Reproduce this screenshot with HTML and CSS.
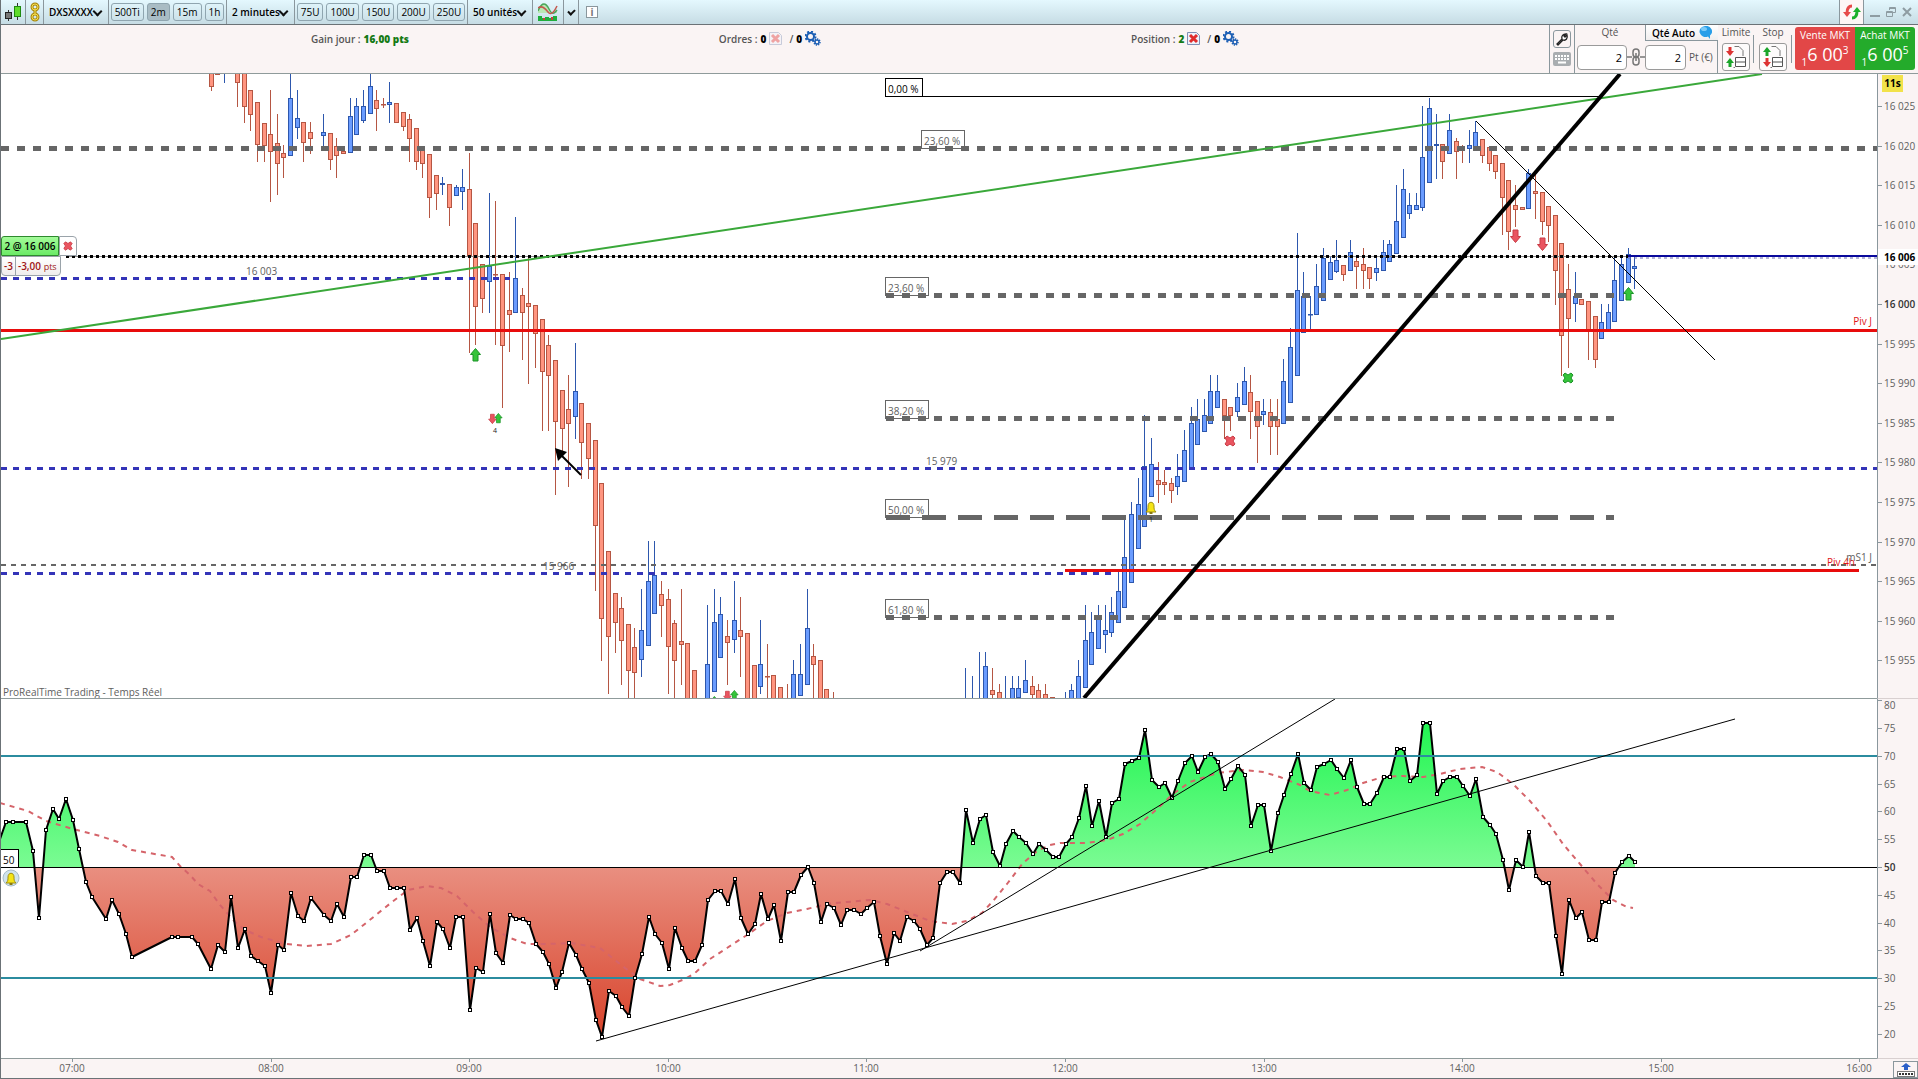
FILE: index.html
```html
<!DOCTYPE html>
<html lang="fr">
<head>
  <meta charset="UTF-8">
  <meta name="viewport" content="width=device-width, initial-scale=1.0">
  <title>DXSXXXX - 2 minutes</title>
  <link rel="stylesheet" href="styles.css">
</head>
<body>
  <header class="toolbar">
    <div class="tool tool-candles">
      <svg width="16" height="20" viewBox="0 0 16 20">
        <path d="M3.5 8v11M12.500 1v17" stroke="#333" />
        <rect x="0.500" y="10.500" width="6" height="6" fill="#777" stroke="#222" />
        <rect x="9.500" y="4.500" width="6" height="10" fill="#5fdc2c" stroke="#1f8a10" />
      </svg>
    </div>
    <div class="tool tool-link">
      <svg width="10" height="20" viewBox="0 0 10 20" fill="none" stroke="#a98a10" stroke-width="3">
        <rect x="2" y="2" width="6" height="6" rx="3" />
        <rect x="2" y="12" width="6" height="6" rx="3" />
        <path d="M5 6v8" />
        <g stroke="#f5dc50" stroke-width="1">
          <rect x="2" y="2" width="6" height="6" rx="3" />
          <rect x="2" y="12" width="6" height="6" rx="3" />
          <path d="M5 6v8" />
        </g>
      </svg>
    </div>
    <div class="tool tool-symbol">
      <select aria-label="Instrument"><option>DXSXXXX</option></select>
    </div>
    <div class="tool tool-units time-units">
      <button type="button">500Ti</button>
      <button type="button" class="active">2m</button>
      <button type="button">15m</button>
      <button type="button">1h</button>
    </div>
    <div class="tool tool-period">
      <select aria-label="Période"><option>2 minutes</option></select>
    </div>
    <div class="tool tool-units bar-units">
      <button type="button">75U</button>
      <button type="button">100U</button>
      <button type="button">150U</button>
      <button type="button">200U</button>
      <button type="button">250U</button>
    </div>
    <div class="tool tool-count">
      <select aria-label="Nombre d'unités"><option>50 unités</option></select>
    </div>
    <div class="tool tool-indicators">
      <svg width="20" height="20" viewBox="0 0 20 20">
        <path d="M0 9C4 -1 8 1 11 7s5 5 8 1v3H0z" fill="#b8e8b4" />
        <path d="M0 9C4 -1 8 1 11 7s5 5 8 1" fill="none" stroke="#4aa65a" stroke-width="1.500" />
        <path d="M0 6c4-3 7 0 10 4s6 0 9-6" fill="none" stroke="#c4574e" stroke-width="1.500" />
        <path d="M0 14h4v2h3v-1h4v1h4v-2h4v5H0z" fill="#1eae3c" />
        <path d="M5 16h2v2H5zM13 15h2v3h-2z" fill="#c84040" />
      </svg>
    </div>
    <div class="tool tool-more"><button type="button" class="chevron" aria-label="Plus"></button></div>
    <div class="tool tool-info"><button type="button" class="info">i</button></div>
    <div class="window-actions">
      <button type="button" class="sync" aria-label="Synchroniser">
        <svg width="18" height="18" viewBox="0 0 18 18">
          <path d="M9 3C5 3 4 6 4 10" fill="none" stroke="#e64a4a" stroke-width="3" />
          <path d="M0 9h8l-4 5z" fill="#e64a4a" />
          <path d="M9 15c4 0 5-3 5-7" fill="none" stroke="#1cb02c" stroke-width="3" />
          <path d="M10 9h8l-4-5z" fill="#1cb02c" />
        </svg>
      </button>
      <button type="button" aria-label="Réduire">
        <svg width="10" height="12" viewBox="0 0 10 12"><path d="M0 10h10" stroke="#8e9ca2" stroke-width="2" /></svg>
      </button>
      <button type="button" aria-label="Restaurer">
        <svg width="10" height="12" viewBox="0 0 10 12" fill="none" stroke="#8e9ca2" stroke-width="1"><path d="M3.500 4V1.500h6v5H7M3 2.500h6" /><path d="M0.500 5.500h6v5h-6zM0 6.500h6" /></svg>
      </button>
      <button type="button" aria-label="Fermer">
        <svg width="10" height="12" viewBox="0 0 10 12"><path d="M1 2l8 8M9 2l-8 8" stroke="#8e9ca2" stroke-width="2" /></svg>
      </button>
    </div>
  </header>

  <section class="trading">
    <div class="status">
      <p>Gain jour : <b class="gain">16,00 pts</b></p>
      <p>Ordres : <b>0</b>
        <button type="button" class="clear" disabled aria-label="Annuler les ordres"><svg width="13" height="13"><use href="#cross" /></svg></button>
        <span>/</span><b>0</b>
        <svg width="16" height="15"><use href="#gears" /></svg>
      </p>
      <p>Position : <b class="gain">2</b>
        <button type="button" class="clear" aria-label="Fermer la position"><svg width="13" height="13"><use href="#cross" /></svg></button>
        <span>/</span><b>0</b>
        <svg width="16" height="15"><use href="#gears" /></svg>
      </p>
    </div>

    <div class="tools">
      <button type="button" class="wrench" aria-label="Réglages">
        <svg width="14" height="14" viewBox="0 0 14 14"><path d="M2 12l5-5c-1-3 1-5 4-5L9 4l1 1 2-2c1 3-1 6-4 5l-5 5z" fill="#fff" stroke="#222" stroke-width="1.300" /></svg>
      </button>
      <svg width="18" height="14" viewBox="0 0 18 14">
        <rect width="18" height="14" rx="2" fill="#a9adb0" />
        <path d="M2 4h14M2 7h14" stroke="#fff" stroke-width="2" stroke-dasharray="2 1" />
        <path d="M5 10.500h8" stroke="#fff" stroke-width="2" />
      </svg>
    </div>
    <div class="quantity">
      <label for="qty" class="qty-label">Qté</label>
      <button type="button" class="auto">Qté Auto
        <svg width="13" height="13" viewBox="0 0 13 13"><path d="M6 0a6 5.500 0 1 0 3 10.500l2 2.500V9.500A6 5.500 0 0 0 6 0z" fill="#279ee8" /><ellipse cx="5" cy="3" rx="3" ry="2" fill="#7ccbf8" /></svg>
      </button>
      <div class="fields">
        <input type="text" id="qty" class="qty" value="2">
        <svg width="18" height="18" viewBox="0 0 18 18" fill="none" stroke="#777" stroke-width="1.500">
          <rect x="6" y="1" width="6" height="8" rx="3" /><rect x="6" y="9" width="6" height="8" rx="3" /><path d="M9 5v8M0 9h5M13 9h5" />
        </svg>
        <input type="text" class="auto-qty" value="2" aria-label="Quantité auto">
        <span>Pt (€)</span>
      </div>
    </div>
    <div class="order">
      <span>Limite</span>
      <button type="button" aria-label="Ordre limite">
        <svg width="24" height="24" viewBox="0 0 24 24">
          <path d="M10.500 1.500H15l4 4V11M9.500 22.500H11" fill="none" stroke="#777" />
          <path d="M6 2v5" stroke="#d33" stroke-width="3" /><path d="M2 6h8l-4 5z" fill="#d33" />
          <path d="M6 22v-5" stroke="#1ba52a" stroke-width="3" /><path d="M2 18h8l-4-5z" fill="#1ba52a" />
          <path d="M11.500 12.500h10v9h-10zM11 17h11" fill="#fff" stroke="#555" />
        </svg>
      </button>
    </div>
    <div class="order">
      <span>Stop</span>
      <button type="button" aria-label="Ordre stop">
        <svg width="24" height="24" viewBox="0 0 24 24">
          <path d="M10.500 1.500H15l4 4V11M9.500 22.500H11" fill="none" stroke="#777" />
          <path d="M6 11V6" stroke="#1ba52a" stroke-width="3" /><path d="M2 7h8L6 2z" fill="#1ba52a" />
          <path d="M6 13v5" stroke="#d33" stroke-width="3" /><path d="M2 17h8l-4 5z" fill="#d33" />
          <path d="M11.500 12.500h10v9h-10zM11 17h11" fill="#fff" stroke="#555" />
        </svg>
      </button>
    </div>
    <div class="market">
      <button type="button" class="sell"><span>Vente MKT</span><span class="quote"><sub>1</sub>6 00<sup>3</sup></span></button>
      <button type="button" class="buy"><span>Achat MKT</span><span class="quote"><sub>1</sub>6 00<sup>5</sup></span></button>
    </div>
  </section>

  <main class="charts">
    <div class="pane">
      <svg id="price" viewBox="1 74 1876 624" preserveAspectRatio="none">
        <g id="candles"></g>
        <g class="levels">
          <path class="fib" d="M1 148.500H1877" />
          <path class="fib" d="M886 295.500H1614M886 418.500H1614M886 617.500H1614" />
          <path class="fib-half" d="M886 517.500H1614" />
          <path class="zero" d="M886 96.500H1600" />
          <path class="blue-dash" d="M1 278.500H510M1 468.500H1877M1 573.500H1111" />
          <path class="support" d="M1 565H1877" />
          <path class="pivot" d="M1 330.500H1877M1065 570.500H1859" />
          <path class="entry" d="M66 256.500H1628" />
          <path class="entry-dots" d="M66 256.500H1628" />
          <path class="last" d="M1628 256H1877" />
          <path class="last-dots" d="M1628 258H1877" />
        </g>
        <g class="labels">
          <rect x="885.500" y="78.500" width="37" height="18" class="black" />
          <rect x="921.500" y="130.500" width="43" height="18" />
          <rect x="885.500" y="277.500" width="43" height="18" />
          <rect x="885.500" y="400.500" width="43" height="18" />
          <rect x="885.500" y="499.500" width="43" height="18" />
          <rect x="885.500" y="599.500" width="43" height="18" />
          <text x="888" y="93" class="black">0,00 %</text>
          <text x="924" y="145">23,60 %</text>
          <text x="888" y="292">23,60 %</text>
          <text x="888" y="415">38,20 %</text>
          <text x="888" y="514">50,00 %</text>
          <text x="888" y="614">61,80 %</text>
          <text x="246" y="275">16 003</text>
          <text x="926" y="465">15 979</text>
          <text x="543" y="570">15 966</text>
          <text x="1872" y="325" class="red" text-anchor="end">Piv J</text>
          <text x="1855" y="566" class="red" text-anchor="end">Piv 4h</text>
          <text x="1872" y="561" text-anchor="end">mS1 J</text>
          <text x="3" y="696">ProRealTime Trading - Temps Réel</text>
        </g>
        <path d="M1 339L1762 74" stroke="#3aa83a" stroke-width="2" />
        <path d="M1084 698L1620 74" stroke="#000" stroke-width="4" />
        <path d="M1476 121L1715 360" stroke="#000" />
        <path d="M581 475L562 456" stroke="#000" stroke-width="2" />
        <path d="M555 448l12 4-9 9z" />
        <g class="up">
          <use href="#arrow" x="475" y="348" />
          <use href="#arrow" x="1628" y="287" />
          <use href="#arrow" transform="translate(498 413) scale(.75)" />
          <use href="#arrow" transform="translate(734 690) scale(.75)" />
          <use href="#arrow" transform="translate(714 696) scale(.75)" />
          <use href="#x-mark" x="1568" y="378" />
        </g>
        <g class="down">
          <use href="#arrow" transform="translate(1515 243) scale(1 -1)" />
          <use href="#arrow" transform="translate(1542 251) scale(1 -1)" />
          <use href="#arrow" transform="translate(492 424) scale(.75 -.75)" />
          <use href="#arrow" transform="translate(727 701) scale(.75 -.75)" />
          <use href="#x-mark" x="1230" y="441" />
        </g>
        <use href="#bell" x="1151" y="507" />
        <text x="493" y="433" class="tiny">4</text>
        <text x="1149" y="522" class="tiny">1</text>
      </svg>
      <div class="position">
        <button type="button" class="size">2 @ 16 006</button>
        <button type="button" class="close" aria-label="Fermer"><svg width="10" height="10" viewBox="-6 -6 12 12" class="down"><use href="#x-mark" /></svg></button>
        <div class="result"><span>-3</span><span>-3,00 <small>pts</small></span></div>
      </div>
    </div>
    <div class="scale">
      <svg id="price-scale" viewBox="1878 74 40 624" preserveAspectRatio="none"></svg>
      <span class="countdown">11s</span>
    </div>

    <div class="pane">
      <svg id="rsi" viewBox="1 699 1876 359" preserveAspectRatio="none">
        <defs>
          <linearGradient id="over" gradientUnits="userSpaceOnUse" x1="0" y1="723" x2="0" y2="867">
            <stop offset="0" stop-color="#22f552" /><stop offset="1" stop-color="#7bfb93" />
          </linearGradient>
          <linearGradient id="under" gradientUnits="userSpaceOnUse" x1="0" y1="867" x2="0" y2="1038">
            <stop offset="0" stop-color="#e98f80" /><stop offset="1" stop-color="#d8432b" />
          </linearGradient>
          <clipPath id="above"><rect x="0" y="699" width="1877" height="168" /></clipPath>
          <clipPath id="below"><rect x="0" y="867" width="1877" height="191" /></clipPath>
        </defs>
        <path id="area-over" fill="url(#over)" clip-path="url(#above)" />
        <path id="area-under" fill="url(#under)" clip-path="url(#below)" />
        <path id="average" class="average" />
        <path class="mid" d="M1 867.500H1877" />
        <path id="rsi-line" class="rsi-line" />
        <path class="band" d="M1 756H1877M1 978H1877" />
        <g id="rsi-points" class="points"></g>
        <path class="trend" d="M596 1041L1735 719M920 951L1335 699" />
        <rect x="0.500" y="849.500" width="18" height="18" fill="#fff" stroke="#000" />
        <text x="3" y="864" class="black">50</text>
        <circle cx="11" cy="878" r="8" fill="#cfe3ec" stroke="#a8bcc8" />
        <use href="#bell" x="11" y="878" />
      </svg>
    </div>
    <div class="scale">
      <svg id="rsi-scale" viewBox="1878 699 40 359" preserveAspectRatio="none"></svg>
    </div>

    <div class="times"><svg id="time-scale" viewBox="1 1059 1917 19" preserveAspectRatio="none"></svg>
      <button type="button" class="dock" aria-label="Afficher le panneau">
        <svg width="20" height="14" viewBox="0 0 20 14">
          <path d="M10 0l5 4h-3v3H8V4H5z" fill="#2a5fc8" />
          <rect x="1.500" y="8.500" width="17" height="5" fill="#fff" stroke="#777" />
          <path d="M3 11h14" stroke="#333" stroke-width="2" stroke-dasharray="2 1" />
        </svg>
      </button>
    </div>
  </main>

  <svg class="symbols" width="0" height="0">
    <symbol id="cross" viewBox="0 0 13 13">
      <path d="M0.500 0.500h9l3 3v9h-12z" fill="#eef1fa" stroke="#7d8fb5" />
      <path d="M3 3l7 7M10 3l-7 7" stroke="#e02c2c" stroke-width="3" />
    </symbol>
    <symbol id="gears" viewBox="0 0 16 15">
      <circle cx="5.500" cy="5.500" r="3.500" fill="none" stroke="#1d5fb4" stroke-width="2" />
      <circle cx="5.500" cy="5.500" r="5" fill="none" stroke="#1d5fb4" stroke-width="2" stroke-dasharray="2 1.900" />
      <circle cx="12" cy="11" r="2" fill="none" stroke="#1d5fb4" stroke-width="1.500" />
      <circle cx="12" cy="11" r="3" fill="none" stroke="#1d5fb4" stroke-width="1.500" stroke-dasharray="1.200 1.100" />
    </symbol>
    <g id="arrow"><path d="M.5.5l5 6h-2.500v6.500h-5V6.500h-2.500z" /></g>
    <g id="x-mark"><path d="M-3-5l3 2 3-2 2 2-2 3 2 3-2 2-3-2-3 2-2-2 2-3-2-3z" /></g>
    <g id="bell">
      <path d="M-5 5c2-2 2-3 2-6 0-5 6-5 6 0 0 3 0 4 2 6z" fill="#f5e416" stroke="#a08f10" />
      <path d="M-1.500 6h3" stroke="#8a7a10" stroke-width="2" />
    </g>
  </svg>

  <script src="chart.js"></script>
</body>
</html>
```

FILE: styles.css
```css
* {
  box-sizing: border-box;
}

body {
  display: flex;
  flex-direction: column;
  height: 100vh;
  margin: 0;
  border-left: 1px solid #6b7276;
  border-bottom: 1px solid #6b7276;
  background-color: #faf4f4;
  color: #555;
  font-family: "Open Sans", sans-serif;
  font-size: 10px;
  line-height: 14px;
  overflow: hidden;
}

button, input, select {
  margin: 0;
  padding: 0;
  border: none;
  background: none;
  color: #000;
  font: inherit;
}

svg {
  display: block;
}

p {
  margin: 0;
}

/* Top toolbar */
.toolbar {
  display: flex;
  flex: none;
  height: 25px;
  border-bottom: 1px solid #6b7276;
  background: linear-gradient(#e4f8fe, #c6dce4);
}

.tool {
  position: relative;
  display: flex;
  align-items: center;
  justify-content: center;
  border-right: 1px solid #8a979d;
}

.tool-candles {
  width: 25px;
}

.tool-link {
  width: 18px;
}

.tool-symbol {
  width: 65px;
}

.tool-period {
  width: 68px;
}

.tool-count {
  width: 65px;
}

.tool-indicators {
  width: 31px;
}

.tool-more {
  width: 15px;
}

.tool-info {
  padding-left: 7px;
  border-right: none;
}

.tool select {
  width: 100%;
  height: 20px;
  padding-left: 5px;
  appearance: none;
  font-weight: 600;
}

.tool-symbol::after, .tool-period::after, .tool-count::after, .chevron::after {
  content: "";
  width: 5px;
  height: 5px;
  border-right: 2px solid #111;
  border-bottom: 2px solid #111;
  transform: rotate(45deg);
}

.tool-symbol::after, .tool-period::after, .tool-count::after {
  position: absolute;
  top: 8px;
  right: 7px;
  pointer-events: none;
}

.chevron {
  display: flex;
  width: 5px;
  height: 8px;
}

.tool-units {
  gap: 3px;
  padding: 0 3px;
}

.time-units {
  width: 118px;
}

.bar-units {
  width: 173px;
}

.tool-units button {
  height: 18px;
  padding: 0 3px;
  border: 1px solid #8fa5af;
  border-radius: 3px;
}

.tool-units .active {
  background-color: #a9bcc4;
}

.info {
  width: 12px;
  height: 12px;
  border: 1px solid #8a979d;
  background-color: #fff;
  color: #777;
  font-weight: bold;
  line-height: 10px;
}

.window-actions {
  display: flex;
  align-items: center;
  gap: 6px;
  margin-left: auto;
  padding-right: 6px;
}

.window-actions .sync {
  display: flex;
  align-items: center;
  justify-content: center;
  width: 25px;
  height: 24px;
  border-left: 1px solid #8a979d;
  border-right: 1px solid #8a979d;
  background-color: #fdf6f6;
}

/* Trading bar */
.trading {
  display: flex;
  flex: none;
  height: 49px;
  border-bottom: 1px solid #8f9b9b;
}

.status {
  display: flex;
  flex: 1;
  justify-content: space-evenly;
  padding-top: 6px;
  font-weight: 600;
}

.status p {
  display: flex;
  align-items: center;
  gap: 3px;
  height: 15px;
}

.status b {
  color: #000;
}

.status .gain {
  color: #147a14;
}

.clear:disabled {
  opacity: 0.4;
}

.clear + span {
  margin-left: 4px;
}

.tools {
  display: flex;
  flex-direction: column;
  align-items: center;
  gap: 4px;
  width: 26px;
  padding-top: 5px;
  border-left: 1px solid #8a979d;
  border-right: 1px solid #8a979d;
}

.wrench {
  display: flex;
  align-items: center;
  justify-content: center;
  width: 18px;
  height: 18px;
  border: 1px solid #8a979d;
  border-radius: 3px;
}

.quantity {
  display: grid;
  grid-template-columns: 70px 73px;
  grid-template-rows: 16px 1fr;
  width: 143px;
  border-right: 1px solid #8a979d;
}

.qty-label {
  text-align: center;
}

.auto {
  display: flex;
  align-items: center;
  justify-content: center;
  gap: 4px;
  border-left: 1px solid #8a979d;
  border-bottom: 1px solid #8a979d;
  background: linear-gradient(#fff, #f0eeee);
  font-weight: 600;
}

.fields {
  grid-column: 1 / 3;
  display: flex;
  align-items: center;
  padding-left: 2px;
}

.fields input {
  height: 25px;
  padding-right: 4px;
  border: 1px solid #9a9a9a;
  border-radius: 4px;
  background-color: #fff;
  text-align: right;
  font-size: 11px;
}

.fields .qty {
  width: 50px;
}

.fields .auto-qty {
  width: 41px;
}

.fields span {
  padding-left: 3px;
}

.order {
  position: relative;
  display: flex;
  flex-direction: column;
  align-items: center;
  gap: 4px;
  width: 36px;
}

.order + .order {
  width: 38px;
}

.order::after {
  content: "";
  position: absolute;
  top: 10px;
  right: 0;
  width: 1px;
  height: 28px;
  background-color: #8a979d;
}

.order button {
  display: flex;
  align-items: center;
  justify-content: center;
  width: 28px;
  height: 28px;
  border: 1px solid #9a9a9a;
  border-radius: 3px;
  background-color: #fdfbfb;
}

.market {
  display: flex;
  padding: 2px 3px 3px;
}

.market button {
  display: flex;
  flex-direction: column;
  align-items: center;
  width: 60px;
  padding-top: 1px;
  color: #fff;
}

.market .sell {
  border-radius: 3px 0 0 3px;
  background-color: #e24747;
}

.market .buy {
  border-radius: 0 3px 3px 0;
  background-color: #24ab2b;
}

.quote {
  font-size: 18px;
  line-height: 24px;
}

.quote sub, .quote sup {
  font-size: 10px;
  line-height: 0;
}

/* Charts */
.charts {
  flex: 1;
  display: grid;
  grid-template-columns: 1fr 41px;
  grid-template-rows: 625fr 360fr 19px;
  min-height: 0;
}

.pane, .scale {
  position: relative;
  min-width: 0;
  min-height: 0;
}

.pane {
  border-bottom: 1px solid #8f9b9b;
  background-color: #fff;
}

.scale {
  border-left: 1px solid #8a979d;
  border-bottom: 1px solid #d8d0d0;
}

.scale:last-of-type {
  border-bottom-color: #faf4f4;
}

.pane > svg, .scale > svg, .times > svg {
  width: 100%;
  height: 100%;
}

.times {
  position: relative;
  grid-column: 1 / 3;
  min-height: 0;
}

.dock {
  position: absolute;
  right: 0;
  bottom: 0;
  display: flex;
  align-items: center;
  justify-content: center;
  width: 25px;
  height: 17px;
  border: 1px solid #8a979d;
}

text {
  fill: #606060;
  font-size: 10px;
}

.black {
  fill: #000;
}

.red {
  fill: #e01515;
}

.tiny {
  fill: #222;
  font-size: 7px;
}

.labels rect {
  fill: none;
  stroke: #666;
}

.labels rect.black {
  stroke: #000;
}

.bull {
  fill: #6a9cff;
  stroke: #2d57ad;
}

.bear {
  fill: #ff9580;
  stroke: #b55643;
}

.levels path, .average, .mid, .rsi-line, .band, .trend {
  fill: none;
}

.levels .fib {
  stroke: #666;
  stroke-width: 5;
  stroke-dasharray: 8 8;
}

.levels .fib-half {
  stroke: #666;
  stroke-width: 5;
  stroke-dasharray: 24 12;
}

.levels .zero {
  stroke: #000;
}

.levels .blue-dash {
  stroke: #3434b8;
  stroke-width: 3;
  stroke-dasharray: 6 6;
}

.levels .support {
  stroke: #666;
  stroke-width: 2;
  stroke-dasharray: 5 5;
}

.levels .pivot {
  stroke: #e80c0c;
  stroke-width: 3;
}

.levels .entry {
  stroke: #888;
}

.levels .entry-dots {
  stroke: #000;
  stroke-width: 3;
  stroke-dasharray: 3 3;
}

.levels .last {
  stroke: #0a0a9c;
  stroke-width: 2;
}

.levels .last-dots {
  stroke: #6a6ab0;
  stroke-dasharray: 3 3;
}

.up {
  fill: #35c43a;
  stroke: #1c9428;
}

.down {
  fill: #ea5560;
  stroke: #c83c46;
}

.mid, .trend {
  stroke: #000;
}

.band {
  stroke: #2b8c9f;
  stroke-width: 2;
}

.rsi-line {
  stroke: #000;
  stroke-width: 2;
  stroke-linejoin: round;
}

.average {
  stroke: #d5646a;
  stroke-width: 2;
  stroke-dasharray: 5 5;
}

.points rect {
  fill: #fff;
  stroke: #000;
}

.ticks {
  stroke: #8a979d;
}

.strong {
  fill: #333;
  font-weight: 600;
}

.price-tag {
  fill: #fff;
}

.price-text {
  fill: #000;
  font-weight: bold;
}

.countdown {
  position: absolute;
  top: 1px;
  left: 4px;
  width: 21px;
  height: 17px;
  background-color: #f2e24a;
  color: #000;
  font-weight: bold;
  line-height: 17px;
  text-align: center;
}

/* Open position marker */
.position {
  position: absolute;
  top: 162px;
  left: 0;
  display: grid;
  grid-template-columns: 58px 18px;
  grid-template-rows: 20px 20px;
}

.size {
  border: 1px solid #2e8a2e;
  border-radius: 3px 0 0 0;
  background: linear-gradient(#a4fb9a, #6bea66);
  font-weight: 600;
}

.close {
  display: flex;
  align-items: center;
  justify-content: center;
  border: 1px solid #9aa3aa;
  border-radius: 0 4px 0 0;
  background-color: #fff;
}

.result {
  grid-column: 1 / 3;
  display: flex;
  width: 60px;
  border: 1px solid #9aa3aa;
  border-radius: 0 0 4px 4px;
  background: linear-gradient(#fff, #f0eded);
  color: #a01515;
  font-weight: 600;
  line-height: 18px;
}

.result span {
  padding: 0 2px;
}

.result span + span {
  border-left: 1px solid #9aa3aa;
}

.result small {
  font-size: 9px;
  font-weight: normal;
}

.symbols {
  position: absolute;
}
```

FILE: chart.js
```js
// x, high, body top, body bottom, low, direction (1 = up, 0 = down)
const candles = [
  [211,60,60,86,90,0],[217,60,60,74,74,0],[224,60,60,70,82,1],[237,60,60,82,106,0],[244,60,60,106,122,0],
  [250,90,90,114,130,0],[257,102,102,144,161,0],[264,123,123,145,161,0],[270,90,134,151,201,0],[277,114,143,163,194,0],
  [283,145,153,157,177,0],[290,60,98,155,155,1],[297,90,118,127,138,1],[303,122,122,142,161,0],[310,122,132,138,153,0],
  [323,114,132,135,145,1],[330,133,133,159,169,0],[336,138,146,155,177,0],[343,150,151,153,153,0],[350,98,116,152,152,1],
  [356,98,106,134,134,1],[363,90,106,120,122,1],[370,60,86,113,113,1],[376,90,100,108,130,0],[383,98,104,104,107,0],
  [389,82,102,104,122,1],[396,103,103,122,122,0],[403,112,112,126,130,0],[409,114,119,138,161,0],[416,128,128,161,169,0],
  [422,146,146,163,177,0],[429,154,154,197,217,0],[436,175,175,193,209,0],[442,177,183,184,194,1],[449,184,184,207,225,0],
  [456,185,187,195,195,1],[462,169,187,191,209,1],[469,153,189,256,352,0],[475,223,223,306,344,0],[482,264,264,298,312,0],
  [489,193,266,281,312,1],[495,201,274,274,344,0],[502,274,274,345,407,0],[509,272,310,314,351,0],[515,217,278,312,312,1],
  [522,288,295,312,359,0],[528,256,303,306,383,0],[535,305,305,333,367,0],[542,319,319,371,430,0],[548,335,345,375,430,0],
  [555,360,360,421,494,0],[562,390,390,428,450,0],[568,375,409,423,486,0],[575,343,391,416,438,1],[581,403,403,442,478,0],
  [588,423,423,458,478,0],[595,440,440,525,590,0],[601,483,483,618,660,0],[608,551,551,636,693,0],[615,593,593,622,652,0],
  [621,597,608,640,684,0],[628,624,624,670,710,0],[634,628,647,672,710,0],[641,589,630,659,676,1],[648,541,581,645,645,1],
  [654,541,575,613,613,1],[661,581,594,605,636,0],[668,589,599,646,693,0],[674,620,623,660,710,0],[681,589,641,644,684,0],
  [687,643,643,710,710,0],[694,670,670,710,710,0],[707,605,664,710,710,1],[714,589,622,691,691,1],[720,597,614,657,657,1],
  [727,620,636,642,684,0],[734,581,620,639,652,1],[740,597,630,636,676,0],[747,633,633,710,710,0],[754,665,665,710,710,0],
  [760,620,664,686,693,1],[767,644,676,676,710,0],[773,675,675,710,710,0],[780,687,687,710,710,0],[787,684,705,710,710,0],
  [793,660,674,710,710,1],[800,644,674,695,695,1],[807,589,628,684,684,1],[813,644,656,664,710,0],[820,660,660,710,710,0],
  [826,689,689,710,710,0],[833,692,705,710,710,0],[965,668,705,710,710,1],[972,676,705,710,710,1],[979,652,705,710,710,1],
  [985,652,666,710,710,1],[992,668,690,694,710,0],[999,684,692,710,710,0],[1005,676,705,710,710,1],[1012,676,688,710,710,1],
  [1018,676,688,697,697,1],[1025,660,680,692,692,1],[1032,676,686,694,710,0],[1038,684,690,710,710,0],[1045,684,694,710,710,0],
  [1052,697,697,710,710,0],[1065,692,705,710,710,1],[1071,684,690,710,710,1],[1078,660,676,710,710,1],[1085,605,640,687,687,1],
  [1091,612,632,664,664,1],[1098,605,619,648,648,1],[1105,605,630,634,652,1],[1111,597,612,632,636,1],[1118,571,591,622,622,1],
  [1124,518,557,607,607,1],[1131,502,514,582,582,1],[1138,478,504,548,548,1],[1144,415,466,526,526,1],[1151,438,464,496,496,1],
  [1158,462,480,484,502,0],[1164,470,482,484,494,0],[1171,478,483,490,502,0],[1177,454,476,486,494,1],[1184,430,450,481,481,1],
  [1191,407,423,467,467,1],[1197,399,419,444,444,1],[1204,399,415,431,431,1],[1210,375,391,423,423,1],[1217,375,391,407,407,1],
  [1224,399,399,415,438,0],[1230,407,407,415,430,0],[1237,383,397,411,416,1],[1244,367,381,404,404,1],[1250,375,392,411,438,0],
  [1257,401,401,426,462,0],[1263,399,411,414,424,1],[1270,399,412,426,454,0],[1277,399,419,426,454,0],[1283,359,381,423,423,1],
  [1290,328,347,402,402,1],[1297,233,290,375,375,1],[1303,272,296,332,332,1],[1310,296,314,314,329,1],[1316,264,286,314,314,1],
  [1323,248,258,300,300,1],[1330,256,262,279,279,1],[1336,240,260,271,272,1],[1343,265,265,274,280,0],[1350,240,252,270,270,1],
  [1356,256,261,266,288,0],[1363,248,264,270,288,0],[1369,267,267,278,288,0],[1376,256,268,272,280,1],[1383,240,252,270,270,1],
  [1389,240,244,261,261,1],[1396,185,221,253,253,1],[1403,169,189,237,237,1],[1409,193,205,213,218,1],[1416,193,205,209,209,1],
  [1422,106,157,207,210,1],[1429,98,108,182,182,1],[1436,114,144,145,178,1],[1442,144,144,161,178,0],[1449,114,130,153,153,1],
  [1456,138,141,151,178,0],[1462,145,149,150,162,0],[1469,130,145,148,162,1],[1475,121,132,147,147,1],[1482,139,139,155,162,0],
  [1489,147,147,163,170,0],[1495,155,155,171,178,0],[1502,163,163,197,234,0],[1508,180,180,231,249,0],[1515,185,205,209,226,0],
  [1522,207,207,209,209,0],[1528,169,173,208,208,1],[1535,172,191,193,218,0],[1542,192,192,221,234,0],[1548,206,206,225,241,0],
  [1555,215,215,270,304,0],[1561,243,243,335,375,0],[1568,264,289,318,367,0],[1575,272,296,303,321,1],[1581,299,299,304,304,0],
  [1588,301,301,330,359,0],[1595,316,316,359,367,0],[1601,304,322,338,338,1],[1608,304,312,330,330,1],[1614,256,280,321,321,1],
  [1621,256,264,300,300,1],[1628,248,254,282,282,1],[1634,256,266,268,288,1]
];

const rsi = [
  [0,839],[6,822],[13,822],[26,822],[33,851],[39,918],[46,830],[53,809],[59,819],[66,799],[73,820],[79,849],[86,882],[92,897],
  [106,919],[112,900],[119,914],[126,934],[132,957],[172,937],[178,937],[192,937],[198,944],[211,969],[218,945],[225,952],
  [231,897],[238,948],[245,929],[251,956],[258,961],[265,966],[271,993],[278,945],[284,950],[291,893],[298,916],[304,921],
  [311,898],[324,915],[331,921],[337,904],[344,917],[351,877],[357,877],[364,855],[371,855],[377,871],[384,871],[390,888],
  [397,888],[404,888],[410,930],[417,918],[423,941],[430,966],[437,922],[443,929],[450,948],[456,917],[463,917],[470,1010],
  [476,968],[483,972],[490,914],[496,953],[503,963],[510,915],[516,919],[523,919],[529,923],[536,944],[543,952],[549,964],
  [556,988],[562,972],[569,943],[576,955],[582,969],[589,983],[596,1020],[602,1037],[609,991],[616,996],[622,1007],[629,1016],
  [635,978],[642,954],[649,917],[655,934],[662,943],[669,969],[675,928],[682,948],[688,961],[695,961],[702,945],[708,900],
  [715,891],[721,891],[728,904],[735,879],[741,918],[748,934],[755,924],[761,894],[768,919],[774,905],[781,941],[788,892],
  [794,892],[801,875],[808,867],[814,883],[821,922],[827,904],[834,908],[841,925],[847,910],[854,910],[861,914],[867,908],
  [874,902],[880,936],[887,964],[894,933],[900,941],[907,917],[914,921],[920,929],[927,945],[933,938],[940,883],[947,872],
  [953,872],[960,883],[966,810],[973,843],[980,819],[986,815],[993,852],[1000,866],[1006,844],[1013,831],[1019,837],[1026,843],
  [1033,854],[1039,844],[1046,850],[1053,857],[1059,857],[1066,844],[1072,837],[1079,818],[1086,786],[1092,826],[1099,801],
  [1106,837],[1112,803],[1119,799],[1125,764],[1132,761],[1139,758],[1145,730],[1152,780],[1159,787],[1165,783],[1172,798],
  [1178,781],[1185,763],[1192,756],[1198,772],[1205,757],[1211,754],[1218,762],[1225,789],[1231,779],[1238,766],[1245,775],
  [1251,826],[1258,805],[1264,805],[1271,851],[1278,813],[1284,795],[1291,774],[1298,754],[1304,783],[1311,790],[1317,767],
  [1324,764],[1331,760],[1337,769],[1344,778],[1351,760],[1357,787],[1364,804],[1370,804],[1377,793],[1384,777],[1390,777],
  [1397,749],[1404,749],[1410,781],[1417,775],[1423,723],[1430,723],[1437,794],[1443,781],[1450,777],[1457,777],[1463,786],
  [1470,796],[1476,779],[1483,817],[1490,825],[1496,834],[1503,860],[1509,890],[1516,860],[1523,867],[1529,832],[1536,876],
  [1543,883],[1549,883],[1556,936],[1562,974],[1569,900],[1576,918],[1582,912],[1589,940],[1596,940],[1602,902],[1609,902],
  [1615,873],[1622,862],[1629,856],[1635,862]
];

const average = [
  [0,803],[28,811],[46,821],[73,829],[100,836],[118,842],[132,850],[172,857],[180,866],[190,875],[198,884],[210,891],[220,905],
  [235,922],[245,930],[261,937],[286,944],[306,946],[331,944],[351,935],[371,919],[392,902],[408,890],[427,886],[441,888],
  [457,896],[473,912],[490,927],[510,938],[527,944],[547,944],[571,943],[600,948],[625,968],[640,979],[660,986],[670,985],
  [685,979],[695,973],[710,959],[727,948],[747,935],[767,921],[787,913],[807,909],[827,904],[847,902],[870,900],[887,904],
  [907,912],[930,921],[952,924],[967,921],[982,913],[993,901],[1007,884],[1023,863],[1037,851],[1050,845],[1060,843],
  [1087,843],[1107,840],[1123,834],[1140,824],[1157,809],[1173,794],[1190,782],[1217,773],[1243,770],[1263,772],[1280,777],
  [1300,785],[1310,791],[1330,795],[1347,790],[1363,783],[1383,777],[1403,776],[1423,777],[1440,774],[1460,769],[1482,767],
  [1497,772],[1513,784],[1530,801],[1547,821],[1563,844],[1580,864],[1597,884],[1613,900],[1627,907],[1633,908]
];

function priceY(price) {
  return 304 - (price - 16000) * 7.92;
}

function rsiY(value) {
  return 867 - (value - 50) * 5.56;
}

function path(points) {
  return "M" + points.map(p => p.join(" ")).join("L");
}

function drawCandles() {
  let out = "";
  for (const [x, high, top, bottom, low, up] of candles) {
    out += `<g class="${up ? "bull" : "bear"}"><path d="M${x + 0.5} ${high}V${low + 1}"/>`;
    // bars whose body lies below the pane only show their wick
    if (top < 705) {
      out += `<rect x="${x - 1.5}" y="${top + 0.5}" width="4" height="${Math.max(bottom - top, 0.5)}"/>`;
    }
    out += "</g>";
  }
  document.getElementById("candles").innerHTML = out;
}

function drawRsi() {
  const area = path([[0, 867], ...rsi, [1635, 867]]) + "Z";
  document.getElementById("area-over").setAttribute("d", area);
  document.getElementById("area-under").setAttribute("d", area);
  document.getElementById("rsi-line").setAttribute("d", path(rsi));
  document.getElementById("average").setAttribute("d", path(average));
  document.getElementById("rsi-points").innerHTML = rsi.slice(1)
    .map(([x, y]) => `<rect x="${x - 1.5}" y="${y - 1.5}" width="3" height="3"/>`).join("");
}

function tick(y) {
  return `<path class="ticks" d="M1878 ${Math.round(y) + 0.5}h4"/>`;
}

function drawScales() {
  let out = "";
  for (let price = 15955; price <= 16025; price += 5) {
    const y = priceY(price);
    const label = Math.floor(price / 1000) + " " + String(price % 1000).padStart(3, "0");
    out += tick(y) + `<text x="1884" y="${Math.round(y) + 4}"${price === 16000 ? ' class="strong"' : ""}>${label}</text>`;
  }
  out += '<rect class="price-tag" x="1878" y="249" width="40" height="16"/>';
  out += '<text class="price-text" x="1884" y="261">16 006</text>';
  document.getElementById("price-scale").innerHTML = out;

  out = "";
  for (let value = 20; value <= 80; value += 5) {
    const y = rsiY(value);
    out += tick(y) + `<text x="1884" y="${Math.max(Math.round(y) + 4, 709)}"${value === 50 ? ' class="strong"' : ""}>${value}</text>`;
  }
  document.getElementById("rsi-scale").innerHTML = out;

  out = "";
  for (let hour = 7; hour <= 16; hour++) {
    const x = Math.round(72 + (hour - 7) * 198.6);
    out += `<path class="ticks" d="M${x + 0.5} 1059v3"/>`;
    out += `<text x="${x}" y="1072" text-anchor="middle">${String(hour).padStart(2, "0")}:00</text>`;
  }
  document.getElementById("time-scale").innerHTML = out;
}

drawCandles();
drawRsi();
drawScales();
```
